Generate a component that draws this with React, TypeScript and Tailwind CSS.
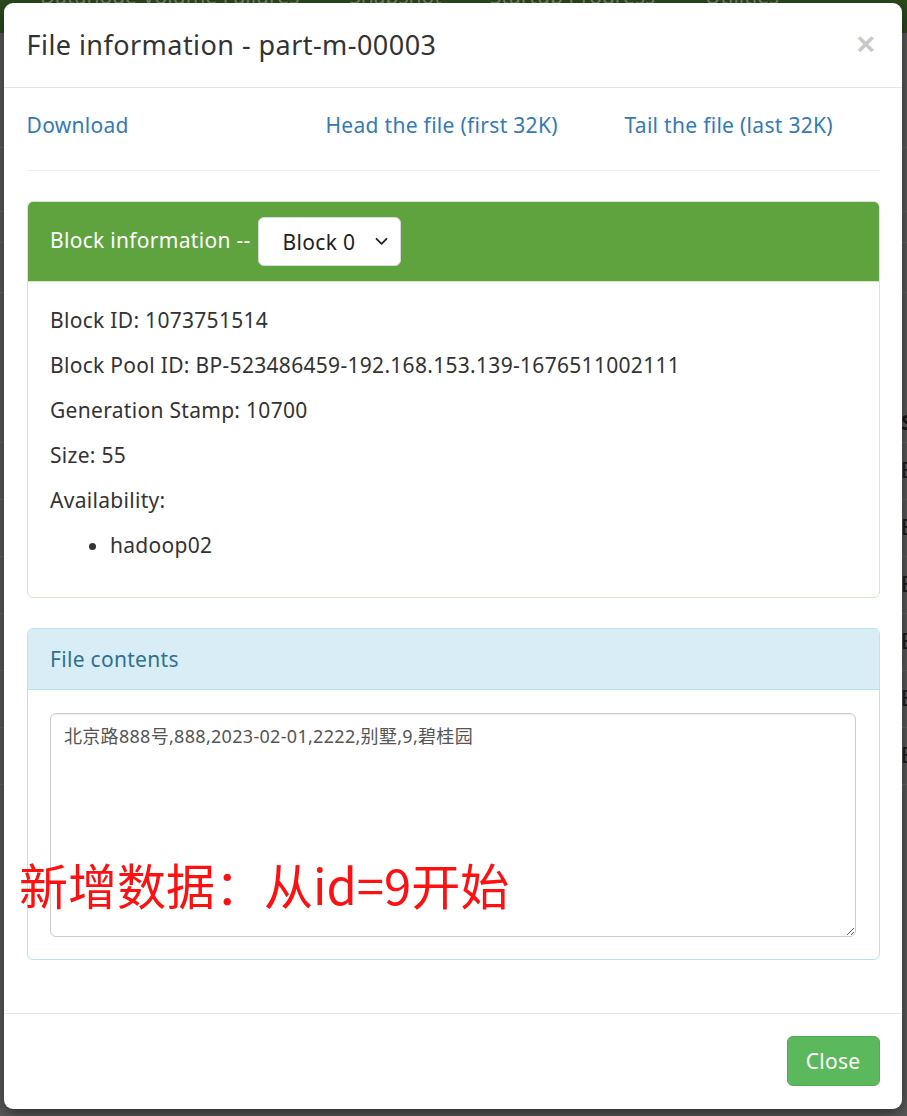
import React from "react";

function Chevron() {
  return (
    <svg width="13" height="9" viewBox="0 0 13 9" fill="none">
      <path d="M1.5 1.8 L6.5 6.8 L11.5 1.8" stroke="#222" strokeWidth="1.8" strokeLinecap="round" strokeLinejoin="round" />
    </svg>
  );
}

export default function App() {
  return (
    <div className="relative w-[907px] h-[1116px] overflow-hidden bg-[#5b5b5b] font-[family-name:'Noto_Sans','Noto_Sans_CJK_SC',sans-serif]">
      {/* background page (dimmed by backdrop) */}
      <div className="h-[33px] bg-[#2b4a1b] overflow-hidden">
        <div className="flex -mt-[19px] text-[21px] leading-[30px] text-[#75876b]">
          <span className="ml-[40px]">Datanode Volume Failures</span>
          <span className="ml-[50px]">Snapshot</span>
          <span className="ml-[48px]">Startup Progress</span>
          <span className="ml-[50px]">Utilities</span>
        </div>
      </div>
      <div className="flex flex-col">
        <div className="h-[115px] border-b border-[#676767]" />
        <div className="h-[64px] border-b border-[#676767]" />
        <div className="h-[31px] border-b border-[#676767]" />
        <div className="h-[50px] border-b border-[#676767]" />
        <div className="h-[150px] border-b border-[#676767] flex items-end pl-[901px] text-[21px] font-bold text-[#1a1a1a] leading-[40px]">S</div>
        {["E", "E", "E", "E", "E", "E"].map((l, i) => (
          <div key={i} className="h-[57px] border-b border-[#676767] flex items-center pl-[901px] text-[21px] text-[#1a1a1a]">
            {l}
          </div>
        ))}
      </div>

      {/* modal */}
      <div className="absolute left-[4px] top-[3px] w-[898px] rounded-[9px] bg-white shadow-[0_5px_15px_rgba(0,0,0,0.5)] text-[#333] tracking-[0.3px]">
        <div className="flex items-start justify-between px-[22.5px] py-[22.5px] border-b border-[#e5e5e5]">
          <h4 className="text-[27px] leading-[38.6px] font-normal text-[#333] tracking-[0.45px]">File information - part-m-00003</h4>
          <span className="text-[36px] font-semibold leading-[32px] text-[#c8c8c8] mt-[2px] mr-[3px]">×</span>
        </div>

        <div className="px-[22.5px] pt-[22.5px] pb-[22.5px]">
          <div className="grid grid-cols-[299px_299px_1fr] text-[21px] leading-[30px] text-[#337ab7]">
            <span>Download</span>
            <span>Head the file (first 32K)</span>
            <span>Tail the file (last 32K)</span>
          </div>
          <hr className="my-[30px] border-t border-[#eee]" />

          <div className="border border-[#d3eac5] rounded-[6px] mb-[30px] overflow-hidden">
            <div className="bg-[#5fa33f] px-[22.5px] py-[15px] flex items-center text-[21px] text-white leading-[30px] border-b border-[#d3eac5]">
              <span className="-mt-[4px]">Block information --</span>
              <div className="ml-[7px] w-[143px] h-[49px] rounded-[6px] bg-white border border-[#d9d9d9] flex items-center justify-between pl-[24px] pr-[12px] text-[#222]">
                <span>Block 0</span>
                <Chevron />
              </div>
            </div>
            <div className="p-[22.5px] text-[21px] leading-[30px] text-[#333]">
              <p className="mb-[15px]">Block ID: 1073751514</p>
              <p className="mb-[15px]">Block Pool ID: BP-523486459-192.168.153.139-1676511002111</p>
              <p className="mb-[15px]">Generation Stamp: 10700</p>
              <p className="mb-[15px]">Size: 55</p>
              <p className="mb-[15px]">Availability:</p>
              <ul className="list-disc pl-[60px] mb-[15px]">
                <li>hadoop02</li>
              </ul>
            </div>
          </div>

          <div className="border border-[#b5e5f0] rounded-[6px] mb-[30px] overflow-hidden">
            <div className="bg-[#d9edf7] px-[22.5px] py-[15px] text-[21px] leading-[30px] text-[#31708f] border-b border-[#b5e5f0]">
              File contents
            </div>
            <div className="p-[22.5px]">
              <textarea
                readOnly
                value="北京路888号,888,2023-02-01,2222,别墅,9,碧桂园"
                className="block w-full h-[224px] border border-[#ccc] rounded-[6px] shadow-[inset_0_1px_1px_rgba(0,0,0,0.075)] px-[13px] py-[9px] text-[18px] leading-[26px] tracking-[0.3px] text-[#555] outline-none"
              />
            </div>
          </div>
        </div>

        <div className="border-t border-[#e5e5e5] p-[22.5px] flex justify-end">
          <button className="h-[50px] px-[18px] rounded-[6px] bg-[#5cb85c] border border-[#4cae4c] text-white text-[21px] leading-[30px]">
            Close
          </button>
        </div>
      </div>

      {/* red annotation */}
      <div className="absolute left-[19px] top-[859px] text-[49px] leading-none text-[#ff1010] whitespace-nowrap font-[family-name:'Noto_Sans_CJK_SC',sans-serif]">
        新增数据：从id=9开始
      </div>
    </div>
  );
}
